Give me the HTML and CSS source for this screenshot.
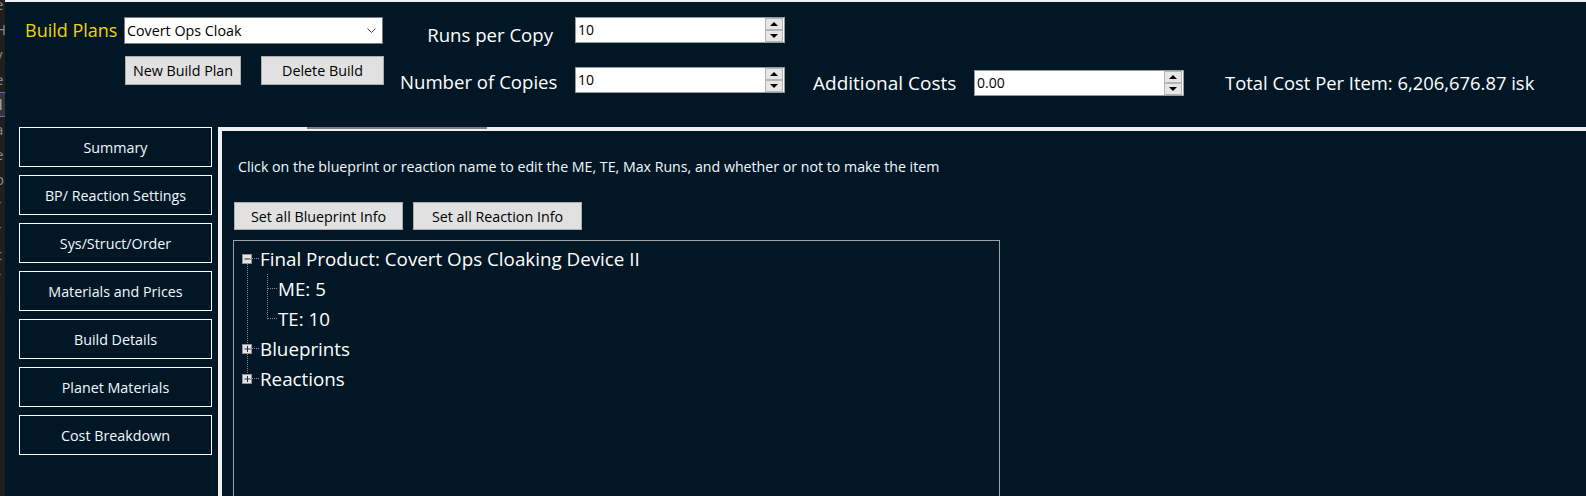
FILE: index.html
```html
<!DOCTYPE html>
<html lang="en">
<head>
<meta charset="utf-8">
<title>Build Plans</title>
<link rel="stylesheet" href="styles.css">
</head>
<body>
<div class="edge">
  <div class="edge-list">
    <span>e</span><span>H</span><span>y</span><span>e</span><span class="sel">il</span><span>a</span><span>e</span><span>o</span><span>r</span><span>r</span><span>c</span><span>f</span><span>t</span>
  </div>
</div>
<div class="app">
  <header class="head">
    <div class="plan">
      <div class="plan-row">
        <span class="plan-label">Build Plans</span>
        <div class="select">
          <span>Covert Ops Cloak</span>
          <svg class="chev" width="9" height="5" viewBox="0 0 9 5"><path d="M0.5 0.5L4.5 4.5L8.5 0.5" fill="none" stroke="#444" stroke-width="1"/></svg>
        </div>
      </div>
      <div class="plan-btns">
        <button class="btn btn-new">New Build Plan</button>
        <button class="btn btn-del">Delete Build</button>
      </div>
    </div>
    <div class="qty">
      <div class="qty-row r1">
        <span class="qty-lbl">Runs per Copy</span>
        <div class="spin"><span class="spin-val">10</span><div class="spin-btns"><span class="sb"><i class="up"></i></span><span class="sb"><i class="dn"></i></span></div></div>
      </div>
      <div class="qty-row r2">
        <span class="qty-lbl">Number of Copies</span>
        <div class="spin"><span class="spin-val">10</span><div class="spin-btns"><span class="sb"><i class="up"></i></span><span class="sb"><i class="dn"></i></span></div></div>
      </div>
    </div>
    <div class="extra">
      <span class="extra-lbl">Additional Costs</span>
      <div class="spin"><span class="spin-val">0.00</span><div class="spin-btns"><span class="sb"><i class="up"></i></span><span class="sb"><i class="dn"></i></span></div></div>
      <span class="total">Total Cost Per Item: 6,206,676.87 isk</span>
    </div>
  </header>
  <div class="main">
    <nav class="nav">
      <div class="nav-btn">Summary</div>
      <div class="nav-btn">BP/ Reaction Settings</div>
      <div class="nav-btn">Sys/Struct/Order</div>
      <div class="nav-btn">Materials and Prices</div>
      <div class="nav-btn">Build Details</div>
      <div class="nav-btn">Planet Materials</div>
      <div class="nav-btn">Cost Breakdown</div>
    </nav>
    <section class="panel">
      <div class="tabs"><span class="tab-sel"></span></div>
      <div class="page">
        <p class="hint">Click on the blueprint or reaction name to edit the ME, TE, Max Runs, and whether or not to make the item</p>
        <div class="actions">
          <button class="btn act">Set all Blueprint Info</button>
          <button class="btn act">Set all Reaction Info</button>
        </div>
        <div class="tree">
          <div class="row">
            <svg class="gut" width="26" height="30" viewBox="0 0 26 30">
              <path d="M13.5 20V30M18 14.5H25" class="dot"/>
              <rect x="8.5" y="10.5" width="9" height="9" class="box"/>
              <path d="M10.5 15h6" class="sign"/>
            </svg>
            <span>Final Product: Covert Ops Cloaking Device II</span>
          </div>
          <div class="row">
            <svg class="gut gut2" width="44" height="30" viewBox="0 0 44 30">
              <path d="M13.5 0V30M33.5 0V30M34 14.5H43" class="dot"/>
            </svg>
            <span>ME: 5</span>
          </div>
          <div class="row">
            <svg class="gut gut2" width="44" height="30" viewBox="0 0 44 30">
              <path d="M13.5 0V30M33.5 0V15M34 14.5H43" class="dot"/>
            </svg>
            <span>TE: 10</span>
          </div>
          <div class="row">
            <svg class="gut" width="26" height="30" viewBox="0 0 26 30">
              <path d="M13.5 0V10M13.5 20V30M18 14.5H25" class="dot"/>
              <rect x="8.5" y="10.5" width="9" height="9" class="box"/>
              <path d="M10.5 15h6M13.5 12v6" class="sign"/>
            </svg>
            <span>Blueprints</span>
          </div>
          <div class="row">
            <svg class="gut" width="26" height="30" viewBox="0 0 26 30">
              <path d="M13.5 0V10M18 14.5H25" class="dot"/>
              <rect x="8.5" y="10.5" width="9" height="9" class="box"/>
              <path d="M10.5 15h6M13.5 12v6" class="sign"/>
            </svg>
            <span>Reactions</span>
          </div>
        </div>
      </div>
    </section>
  </div>
</div>
</body>
</html>
```
FILE: styles.css
```css
* { box-sizing: border-box; margin: 0; padding: 0; }
html, body { width: 1586px; height: 496px; overflow: hidden; }
body {
  display: flex;
  background: #011726;
  font-family: "Open Sans", "Noto Sans", sans-serif;
  color: #ffffff;
}

/* left sliver of another window */
.edge { width: 5px; flex: none; background: #1f1f1f; overflow: hidden; }
.edge-list { margin-top: -8px; display: flex; flex-direction: column; }
.edge-list span {
  display: block; height: 25px; line-height: 25px; font-size: 15px;
  color: #8a8a8a; margin-left: -5px; white-space: nowrap;
}
.edge-list .sel { background: #34343a; box-shadow: inset 0 1px #6f62d8, inset 0 -1px #6f62d8; color: #b0b0b0; }

.app { flex: 1; min-width: 0; display: flex; flex-direction: column; border-top: 2px solid #f0f0f0; }

/* header */
.head { height: 125px; flex: none; display: flex; align-items: flex-start; }
.plan { margin-left: 20px; padding-top: 15px; display: flex; flex-direction: column; }
.plan-row { display: flex; align-items: center; height: 27px; }
.plan-label { width: 99px; color: #f3d30b; font-size: 18px; line-height: 27px; white-space: nowrap; }
.select {
  width: 259px; height: 27px; background: #fff; border: 1px solid #7a7a7a;
  display: flex; align-items: center; justify-content: space-between;
  padding: 0 6px 0 2px; color: #000; font-size: 14.3px;
}
.chev { display: block; }
.plan-btns { display: flex; gap: 20px; margin-top: 12px; padding-left: 100px; }
.btn {
  height: 29px; background: #e1e1e1; border: 1px solid #adadad; color: #000;
  font-family: inherit; font-size: 14.3px; display: flex; align-items: center; justify-content: center;
}
.btn-new { width: 116px; }
.btn-del { width: 123px; }

.qty { margin-left: 16px; padding-top: 15px; display: flex; flex-direction: column; gap: 24px; }
.qty-row { display: flex; align-items: flex-start; height: 26px; }
.qty-lbl { width: 175px; text-align: right; font-size: 18.6px; line-height: 26px; white-space: nowrap; }
.r1 .qty-lbl { padding-right: 22px; margin-top: 5px; }
.r2 .qty-lbl { padding-right: 18px; margin-top: 2px; }

.spin {
  width: 210px; height: 26px; background: #fff; border: 1px solid #9a9a9a;
  display: flex; align-items: stretch; color: #000;
}
.spin-val { flex: 1; font-size: 14px; line-height: 24px; padding-left: 2px; }
.spin-btns { width: 18px; margin: 0 1px 0 0; display: flex; flex-direction: column; }
.sb {
  flex: 1; background: #e6e6e6; border: 1px solid #b4b4b4;
  display: flex; align-items: center; justify-content: center;
}
.sb i { display: block; width: 0; height: 0; border-left: 4px solid transparent; border-right: 4px solid transparent; }
.sb .up { border-bottom: 4px solid #000; }
.sb .dn { border-top: 4px solid #000; }

.extra { margin-left: 28px; padding-top: 68px; display: flex; align-items: center; }
.extra-lbl { width: 161px; font-size: 19px; line-height: 26px; white-space: nowrap; }
.total { margin-left: 41px; font-size: 18.4px; line-height: 26px; white-space: nowrap; }

/* main area */
.main { flex: 1; min-height: 0; display: flex; }
.nav { margin-left: 14px; margin-right: 6px; width: 193px; flex: none; display: flex; flex-direction: column; gap: 8px; }
.nav-btn {
  height: 40px; border: 1px solid #ffffff; display: flex; align-items: center; justify-content: center;
  font-size: 14.3px; color: #f4f8ff;
}

.panel { flex: 1; min-width: 0; border-left: 4px solid #f0f0f0; display: flex; flex-direction: column; }
.tabs { height: 4px; flex: none; background: #f0f0f0; display: flex; align-items: flex-start; }
.tab-sel { margin-left: 85px; width: 180px; height: 2px; background: #7d7d7d; }

.page { padding-left: 11px; display: flex; flex-direction: column; align-items: flex-start; }
.hint { margin-top: 26px; margin-left: 5px; font-size: 14.2px; line-height: 20px; color: #f4f8ff; white-space: nowrap; }
.actions { margin-top: 25px; margin-left: 1px; display: flex; gap: 10px; }
.act { width: 169px; height: 28px; }

.tree { margin-top: 10px; width: 767px; height: 300px; border: 1px solid #a0a0a0; padding-top: 3px; }
.row { height: 30px; display: flex; align-items: center; font-size: 18.8px; white-space: nowrap; }
.gut { display: block; width: 26px; height: 30px; flex: none; }
.gut2 { width: 44px; }
.dot { fill: none; stroke: #8c8c8c; stroke-width: 1; stroke-dasharray: 1 1; }
.box { fill: #e4e4e4; stroke: #8f8f8f; stroke-width: 1; }
.sign { fill: none; stroke: #1c2d52; stroke-width: 1; }
```
